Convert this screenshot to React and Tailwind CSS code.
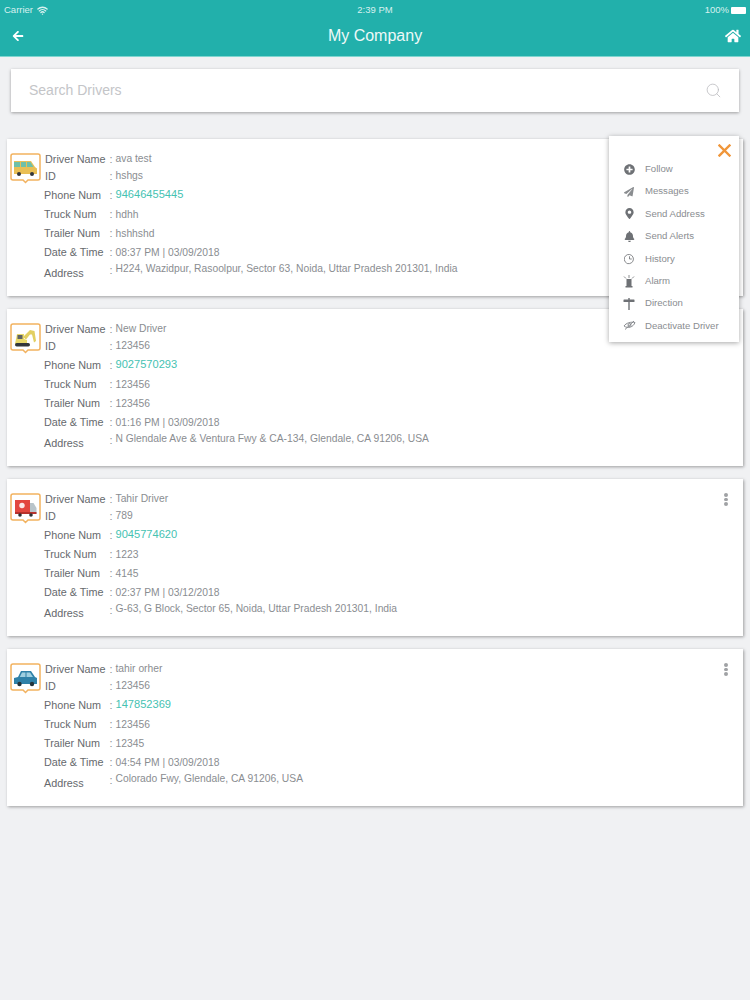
import React from 'react';
import { FaPlusCircle, FaPaperPlane, FaMapMarkerAlt, FaBell, FaHome, FaArrowLeft } from 'react-icons/fa';
import { Search, Wifi } from 'lucide-react';

const Bubble = ({ children }) => (
  <svg width="31" height="31" viewBox="0 0 31 31" className="shrink-0">
    <path d="M3 1h25a2 2 0 0 1 2 2v22a2 2 0 0 1-2 2H18l-2.500 2.500L13 27H3a2 2 0 0 1-2-2V3a2 2 0 0 1 2-2z" fill="#fff" stroke="#f2b25f" strokeWidth="1.500" />
    {children}
  </svg>
);

const Bus = () => (
  <Bubble>
    <path d="M4 8h17l4 6 2 1.500V21H4z" fill="#e9bf55" />
    <rect x="4" y="9" width="6" height="5" fill="#6fc0a8" />
    <rect x="11" y="9" width="5" height="5" fill="#6fc0a8" />
    <path d="M17 9h3.500l3 5H17z" fill="#6fc0a8" />
    <circle cx="9" cy="21" r="2" fill="#33363a" />
    <circle cx="22" cy="21" r="2" fill="#33363a" />
  </Bubble>
);
const Digger = () => (
  <Bubble>
    <path d="M13 14l7-7 4.500 1 1.500 10-2 1.500-2-8-2 0-4 5z" fill="#e2cf62" />
    <path d="M7 11h7v5l3 1v4H5z" fill="#e8d86a" />
    <rect x="7.500" y="12" width="5" height="4" fill="#5d6266" />
    <rect x="5" y="20" width="15" height="3.500" rx="1.700" fill="#33363a" />
  </Bubble>
);
const Truck = () => (
  <Bubble>
    <path d="M5 7h15v14H5z" fill="#e2473f" />
    <path d="M20 10h3.500l3 5v6H20z" fill="#b9c4ca" />
    <circle cx="12" cy="12.500" r="2.700" fill="#fbe9e7" />
    <rect x="5" y="19" width="21.500" height="2" fill="#b8322c" />
    <circle cx="10" cy="22" r="1.800" fill="#2f3235" />
    <circle cx="21" cy="22" r="1.800" fill="#2f3235" />
  </Bubble>
);
const Car = () => (
  <Bubble>
    <path d="M4 15l4-1 3-6h10l4 6 2 1v6H4z" fill="#2f81a8" />
    <path d="M12 9.500h3.500V14H9.800zM16.500 9.500h3.500l3 4.500h-6.500z" fill="#9fcfe0" />
    <circle cx="9.500" cy="21" r="2.200" fill="#24333b" />
    <circle cx="22" cy="21" r="2.200" fill="#24333b" />
  </Bubble>
);

const drivers = [
  { icon: <Bus />, name: 'ava test', id: 'hshgs', phone: '94646455445', truck: 'hdhh', trailer: 'hshhshd', date: '08:37 PM | 03/09/2018', address: 'H224, Wazidpur, Rasoolpur, Sector 63, Noida, Uttar Pradesh 201301, India' },
  { icon: <Digger />, name: 'New Driver', id: '123456', phone: '9027570293', truck: '123456', trailer: '123456', date: '01:16 PM | 03/09/2018', address: 'N Glendale Ave & Ventura Fwy & CA-134, Glendale, CA 91206, USA' },
  { icon: <Truck />, name: 'Tahir Driver', id: '789', phone: '9045774620', truck: '1223', trailer: '4145', date: '02:37 PM | 03/12/2018', address: 'G-63, G Block, Sector 65, Noida, Uttar Pradesh 201301, India', dots: true },
  { icon: <Car />, name: 'tahir orher', id: '123456', phone: '147852369', truck: '123456', trailer: '12345', date: '04:54 PM | 03/09/2018', address: 'Colorado Fwy, Glendale, CA 91206, USA', dots: true },
];

const Row = ({ label, value, h, first, phone }) => (
  <div className={`flex items-center ${h}`}>
    <span className={`text-[#66696d] w-[66px] shrink-0 whitespace-nowrap ${first ? 'pl-[1.500px]' : 'pl-[0.500px]'}`}>{label}</span>
    <span className="text-[#8a8d91] w-[6px] shrink-0">:</span>
    <span className={phone ? 'text-[#45c2b2] text-[11.100px]' : 'text-[#8a8d91] text-[10.300px] pt-[1px]'}>{value}</span>
  </div>
);

const Card = ({ d }) => (
  <div className="relative flex h-[157px] mb-[13px] bg-white shadow-[1px_1px_3px_rgba(0,0,0,0.35)] pl-[3px] pt-[12px]">
    <div className="w-[33.500px] shrink-0 pt-[2px]">{d.icon}</div>
    <div className="flex-1 text-[10.800px] leading-none">
      <Row h="h-[16px]" first label="Driver Name" value={d.name} />
      <Row h="h-[18px]" first label="ID" value={d.id} />
      <Row h="h-[20px]" label="Phone Num" value={d.phone} phone />
      <Row h="h-[19px]" label="Truck Num" value={d.truck} />
      <Row h="h-[19px]" label="Trailer Num" value={d.trailer} />
      <Row h="h-[19px]" label="Date & Time" value={d.date} />
      <div className="flex">
        <span className="text-[#66696d] w-[66px] shrink-0 pl-[0.500px] pt-[6px]">Address</span>
        <span className="text-[#8a8d91] w-[6px] shrink-0 pt-[3px]">:</span>
        <span className="text-[#8a8d91] text-[10.300px] pt-[1.500px]">{d.address}</span>
      </div>
    </div>
    {d.dots && (
      <div className="absolute right-[15.500px] top-[14px] flex flex-col gap-[1px]">
        <span className="w-[4px] h-[3.500px] rounded-full bg-[#a0a2a5]" />
        <span className="w-[4px] h-[3.500px] rounded-full bg-[#a0a2a5]" />
        <span className="w-[4px] h-[3.500px] rounded-full bg-[#a0a2a5]" />
      </div>
    )}
  </div>
);

const C = '#6e7175';
const menu = [
  ['Follow', <FaPlusCircle size={11} color={C} />],
  ['Messages', <FaPaperPlane size={10} color="#8a8d90" />],
  ['Send Address', <FaMapMarkerAlt size={11} color={C} />],
  ['Send Alerts', <FaBell size={11} color={C} />],
  ['History', <svg width="11" height="12" viewBox="0 0 12 12" fill="none" stroke={C} strokeWidth="0.900"><path d="M3 10.500A5 5 0 1 1 6 11H3.500z" /><path d="M6 3v3h2.500" /></svg>],
  ['Alarm', <svg width="12" height="13" viewBox="0 0 12 13" fill={C}><rect x="3.500" y="4" width="5" height="7" /><rect x="2.500" y="11" width="7" height="1.500" /><path d="M6 0v3M1 1.500L3 3.500M11 1.500L9 3.500" stroke={C} strokeWidth="0.800" /></svg>],
  ['Direction', <svg width="12" height="12" viewBox="0 0 12 12" fill={C}><rect x="0.500" y="1.500" width="11" height="2.500" rx="0.500" /><rect x="5.300" y="0" width="1.400" height="12" /></svg>],
  ['Deactivate Driver', <svg width="13" height="11" viewBox="0 0 13 11" fill="none" stroke="#7d8084" strokeWidth="0.900"><path d="M1 6c2-3 7-4.500 11-3.500C10.500 7 5 9 1 6z" /><circle cx="6.500" cy="5" r="1.500" /><path d="M2 9.500L11 1" /></svg>],
];

export default function App() {
  return (
    <div className="relative w-[750px] h-[1000px] overflow-hidden bg-[#f0f1f3] font-['Liberation_Sans',sans-serif]">
      <header className="h-[57px] bg-[#22b0ab] border-b border-[#7fd6d0] text-white">
        <div className="relative flex items-center justify-between h-[20px] px-[4px] text-[9.500px] text-[#d8f1ef]">
          <div className="flex items-center gap-[4px]"><span>Carrier</span><Wifi size={11} strokeWidth={3} /></div>
          <span className="absolute left-0 right-0 text-center">2:39 PM</span>
          <div className="flex items-center gap-[2px]">
            <span>100%</span>
            <span className="w-[15px] h-[7px] bg-white rounded-[1px]" />
          </div>
        </div>
        <div className="relative flex items-center justify-between h-[32px] pl-[12px] pr-[9px]">
          <FaArrowLeft size={12} />
          <span className="absolute left-0 right-0 text-center text-[16px] text-[#eef9f8]">My Company</span>
          <FaHome size={16} />
        </div>
      </header>

      <div className="flex items-center justify-between mx-[11px] mt-[12px] h-[43px] bg-white shadow-[0_1px_3px_rgba(0,0,0,0.35)] pl-[18px] pr-[17px]">
        <span className="text-[14px] text-[#c4c5c8]">Search Drivers</span>
        <Search size={17} strokeWidth={1.100} color="#b9babd" />
      </div>

      <main className="px-[7px] pr-[7px] mt-[27px]">
        {drivers.map((d) => <Card key={d.name} d={d} />)}
      </main>

      <div className="absolute left-[609px] top-[136px] w-[130px] h-[206px] bg-white shadow-[0_1px_5px_rgba(0,0,0,0.35)] pt-[22px]">
        <svg width="13" height="13" viewBox="0 0 13 13" className="absolute right-[8px] top-[8px]" stroke="#f0963a" strokeWidth="2.400" strokeLinecap="square"><path d="M1.500 1.500l10 10M11.500 1.500l-10 10" /></svg>
        {menu.map(([label, icon]) => (
          <div key={label} className="flex items-center h-[22.400px] whitespace-nowrap">
            <span className="flex justify-center items-center w-[14px] ml-[13px] mr-[9px]">{icon}</span>
            <span className="text-[9.600px] text-[#8a8d91]">{label}</span>
          </div>
        ))}
      </div>
    </div>
  );
}
